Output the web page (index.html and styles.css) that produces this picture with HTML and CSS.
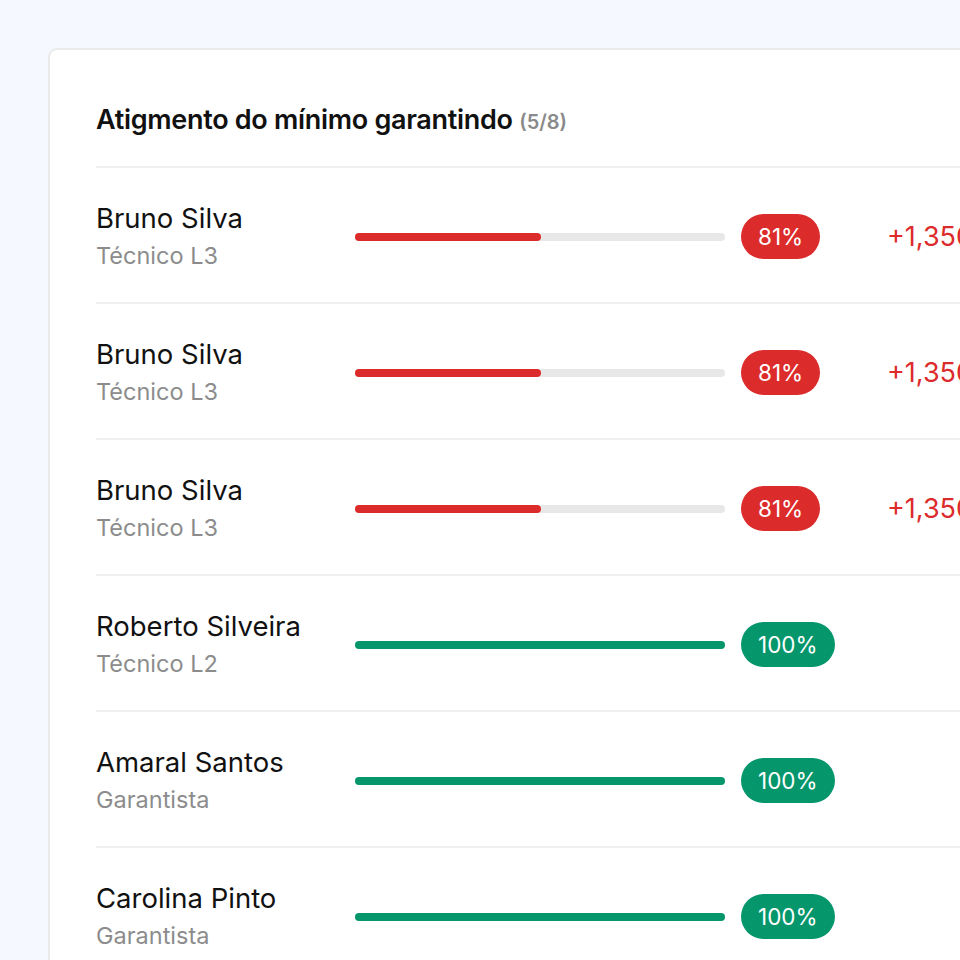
FILE: index.html
```html
<!DOCTYPE html>
<html lang="pt">
<head>
<meta charset="utf-8">
<link rel="stylesheet" href="styles.css">
</head>
<body>
<div class="card">
  <h2 class="title">Atigmento do mínimo garantindo <span class="count">(5/8)</span></h2>
  <div class="list">
    <div class="row">
      <div class="person"><div class="name">Bruno Silva</div><div class="role">Técnico L3</div></div>
      <div class="track"><div class="fill red" style="width:50.3%"></div></div>
      <div class="badge-col"><span class="badge red">81%</span></div>
      <div class="delta">+1,350</div>
    </div>
    <div class="row">
      <div class="person"><div class="name">Bruno Silva</div><div class="role">Técnico L3</div></div>
      <div class="track"><div class="fill red" style="width:50.3%"></div></div>
      <div class="badge-col"><span class="badge red">81%</span></div>
      <div class="delta">+1,350</div>
    </div>
    <div class="row">
      <div class="person"><div class="name">Bruno Silva</div><div class="role">Técnico L3</div></div>
      <div class="track"><div class="fill red" style="width:50.3%"></div></div>
      <div class="badge-col"><span class="badge red">81%</span></div>
      <div class="delta">+1,350</div>
    </div>
    <div class="row">
      <div class="person"><div class="name">Roberto Silveira</div><div class="role">Técnico L2</div></div>
      <div class="track"><div class="fill green" style="width:100%"></div></div>
      <div class="badge-col"><span class="badge green">100%</span></div>
      <div class="delta"></div>
    </div>
    <div class="row">
      <div class="person"><div class="name">Amaral Santos</div><div class="role">Garantista</div></div>
      <div class="track"><div class="fill green" style="width:100%"></div></div>
      <div class="badge-col"><span class="badge green">100%</span></div>
      <div class="delta"></div>
    </div>
    <div class="row">
      <div class="person"><div class="name">Carolina Pinto</div><div class="role">Garantista</div></div>
      <div class="track"><div class="fill green" style="width:100%"></div></div>
      <div class="badge-col"><span class="badge green">100%</span></div>
      <div class="delta"></div>
    </div>
  </div>
</div>
</body>
</html>
```
FILE: styles.css
```css
html, body {
  margin: 0;
  padding: 0;
  background: #f5f8fe;
  overflow: hidden;
  width: 960px;
  height: 960px;
}
body {
  padding: 48px 0 0 48px;
  box-sizing: border-box;
  font-family: Inter, "Noto Sans", sans-serif;
  color: #111;
}
.card {
  width: 1000px;
  background: #fff;
  border: 2px solid #eaeaea;
  border-radius: 9px;
  padding: 54px 0 0 46px;
  box-sizing: border-box;
  min-height: 1000px;
}
.title {
  margin: 0;
  font-size: 27px;
  font-weight: 600;
  line-height: 32px;
  letter-spacing: -0.3px;
  padding-bottom: 28px;
  border-bottom: 2px solid #f0f0f0;
}
.count {
  font-size: 20px;
  font-weight: 600;
  color: #8a8a8a;
  letter-spacing: 0;
}
.row {
  display: grid;
  grid-template-columns: 259px 370px 162px auto;
  align-items: center;
  box-sizing: border-box;
  height: 136px;
  padding-top: 3px;
  border-bottom: 2px solid #f0f0f0;
}
.name {
  font-size: 27.5px;
  line-height: 37px;
  color: #111;
}
.role {
  font-size: 23.5px;
  line-height: 37px;
  color: #8c8c8c;
}
.track {
  height: 8px;
  background: #e8e8e8;
  border-radius: 4px;
}
.fill {
  height: 100%;
  border-radius: 4px;
}
.fill.red { background: #dc2b2b; }
.fill.green { background: #05966b; }
.badge-col {
  padding-left: 16px;
}
.badge {
  display: inline-block;
  height: 45px;
  line-height: 45px;
  padding: 0 17px;
  border-radius: 23px;
  color: #fff;
  font-size: 22.5px;
}
.badge.red { background: #dc2b2b; }
.badge.green { background: #05966b; }
.delta {
  color: #dc2b2b;
  font-size: 27px;
  white-space: nowrap;
}
```
